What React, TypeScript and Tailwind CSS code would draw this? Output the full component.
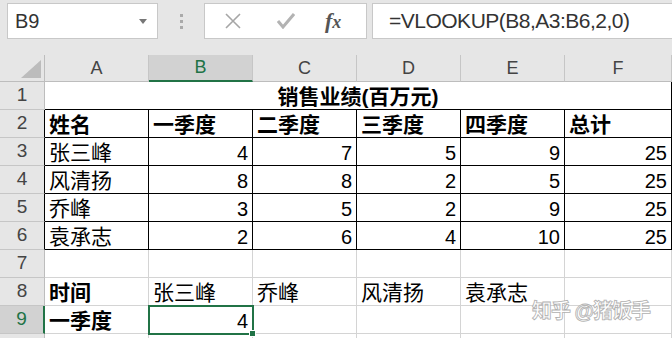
import React from "react";

const CN = "font-['Liberation_Sans','Noto_Sans_CJK_SC',sans-serif]";

type Cell = { t?: string; b?: boolean; r?: boolean };

const rows: Cell[][] = [
  [],
  [
    { t: "姓名", b: true },
    { t: "一季度", b: true },
    { t: "二季度", b: true },
    { t: "三季度", b: true },
    { t: "四季度", b: true },
    { t: "总计", b: true },
  ],
  [{ t: "张三峰" }, { t: "4", r: true }, { t: "7", r: true }, { t: "5", r: true }, { t: "9", r: true }, { t: "25", r: true }],
  [{ t: "风清扬" }, { t: "8", r: true }, { t: "8", r: true }, { t: "2", r: true }, { t: "5", r: true }, { t: "25", r: true }],
  [{ t: "乔峰" }, { t: "3", r: true }, { t: "5", r: true }, { t: "2", r: true }, { t: "9", r: true }, { t: "25", r: true }],
  [{ t: "袁承志" }, { t: "2", r: true }, { t: "6", r: true }, { t: "4", r: true }, { t: "10", r: true }, { t: "25", r: true }],
  [{}, {}, {}, {}, {}, {}],
  [{ t: "时间", b: true }, { t: "张三峰" }, { t: "乔峰" }, { t: "风清扬" }, { t: "袁承志" }, {}],
  [{ t: "一季度", b: true }, { t: "4", r: true }, {}, {}, {}, {}],
];

export default function App() {
  const cols = ["A", "B", "C", "D", "E", "F"];
  return (
    <div className={`w-[672px] h-[338px] overflow-hidden bg-[#e6e6e6] relative ${CN}`}>
      {/* Formula bar */}
      <div className="flex items-start h-[55px] pt-[3px]">
        <div className="ml-[7px] w-[151px] h-[36px] bg-white border border-[#c8c8c8] flex items-center justify-between pl-[7px] pr-[10px]">
          <span className="text-[20px] text-[#333] font-['Liberation_Sans',sans-serif]">B9</span>
          <svg width="8" height="5" viewBox="0 0 8 5"><path d="M0 0 L8 0 L4 5 Z" fill="#777" /></svg>
        </div>
        <div className="w-[46px] h-[36px] flex flex-col items-center justify-center gap-[3px]">
          <div className="w-[3px] h-[3px] bg-[#aaa]" />
          <div className="w-[3px] h-[3px] bg-[#aaa]" />
          <div className="w-[3px] h-[3px] bg-[#aaa]" />
        </div>
        <div className="w-[163px] h-[36px] bg-white border border-[#c8c8c8] flex items-center">
          <svg className="ml-[20px]" width="16" height="16" viewBox="0 0 16 16">
            <path d="M1 1 L15 15 M15 1 L1 15" stroke="#a6a6a6" strokeWidth="1.6" />
          </svg>
          <svg className="ml-[36px]" width="18" height="16" viewBox="0 0 18 16">
            <path d="M1 8 L6 14 L17 1" stroke="#b3b3b3" strokeWidth="3" fill="none" />
          </svg>
          <span className="ml-[30px] text-[22px] italic font-bold text-[#555] font-['Liberation_Serif',serif] leading-none">
            f<span className="text-[18px]">x</span>
          </span>
        </div>
        <div className="ml-[5px] flex-1 h-[36px] bg-white border border-[#c8c8c8] border-r-0 flex items-center pl-[16px]">
          <span className="text-[21px] text-[#333] font-['Liberation_Sans',sans-serif] tracking-[-0.5px]">=VLOOKUP(B8,A3:B6,2,0)</span>
        </div>
      </div>

      {/* Grid */}
      <div className="grid grid-cols-[45px_repeat(5,104px)_107px] grid-rows-[27px_repeat(10,28px)] bg-white">
        {/* corner */}
        <div className="bg-[#e6e6e6] border-r border-b border-[#bdbdbd] relative">
          <svg className="absolute right-[3px] bottom-[3px]" width="20" height="18" viewBox="0 0 20 18">
            <path d="M20 0 L20 18 L0 18 Z" fill="#bcbcbc" />
          </svg>
        </div>
        {cols.map((c) => (
          <div
            key={c}
            className={`flex items-center justify-center text-[18px] border-r border-[#c6c6c6] ${
              c === "B"
                ? "bg-[#d2d2d2] text-[#217346] border-b-2 border-b-[#217346]"
                : "bg-[#e6e6e6] text-[#444] border-b border-b-[#bdbdbd]"
            }`}
          >
            {c}
          </div>
        ))}

        {/* Row 1 */}
        <div className="bg-[#e6e6e6] text-[#444] text-[19px] flex items-center justify-center border-r border-[#bdbdbd] border-b border-b-[#c6c6c6]">1</div>
        <div className="col-span-6 flex items-center justify-center pt-[2px] font-bold text-[21px] text-black border-b border-black border-r border-r-black">
          销售业绩(百万元)
        </div>

        {rows.slice(1).map((row, ri) => {
          const rn = ri + 2;
          const inTable = rn <= 6;
          const sel = rn === 9;
          return (
            <React.Fragment key={rn}>
              <div
                className={`flex items-center justify-center text-[19px] border-b border-b-[#c6c6c6] ${
                  sel
                    ? "bg-[#d2d2d2] text-[#217346] border-r-2 border-r-[#217346]"
                    : `bg-[#e6e6e6] text-[#444] border-r ${inTable ? "border-r-black" : "border-r-[#bdbdbd]"}`
                }`}
              >
                {rn}
              </div>
              {row.map((cell, ci) => {
                const isSel = sel && ci === 1;
                return (
                  <div
                    key={ci}
                    className={`relative flex items-center px-[4px] pt-[2px] text-black ${
                      cell.r ? "justify-end text-[20px]" : "justify-start text-[21px]"
                    } ${cell.b ? "font-bold" : ""} ${
                      inTable ? "border-r border-b border-black" : "border-r border-b border-[#d4d4d4]"
                    } ${isSel ? "outline-2 outline-[#217346] -outline-offset-1 z-10" : ""}`}
                  >
                    <span className="whitespace-nowrap">{cell.t}</span>
                    {isSel && (
                      <div className="absolute right-[-4px] bottom-[-4px] w-[7px] h-[7px] bg-[#217346] border border-white" />
                    )}
                  </div>
                );
              })}
            </React.Fragment>
          );
        })}
        {/* Row 10 partial */}
        <div className="bg-[#e6e6e6] border-r border-[#bdbdbd]" />
        {cols.map((c) => (
          <div key={c} className="border-r border-[#d4d4d4]" />
        ))}
      </div>

      {/* watermark */}
      <div className="absolute left-[532px] top-[296px] text-[20px] text-white [-webkit-text-stroke:0.8px_#a8a8a8] tracking-[-1px] font-bold opacity-90">
        知乎 @猪饭手
      </div>
    </div>
  );
}
